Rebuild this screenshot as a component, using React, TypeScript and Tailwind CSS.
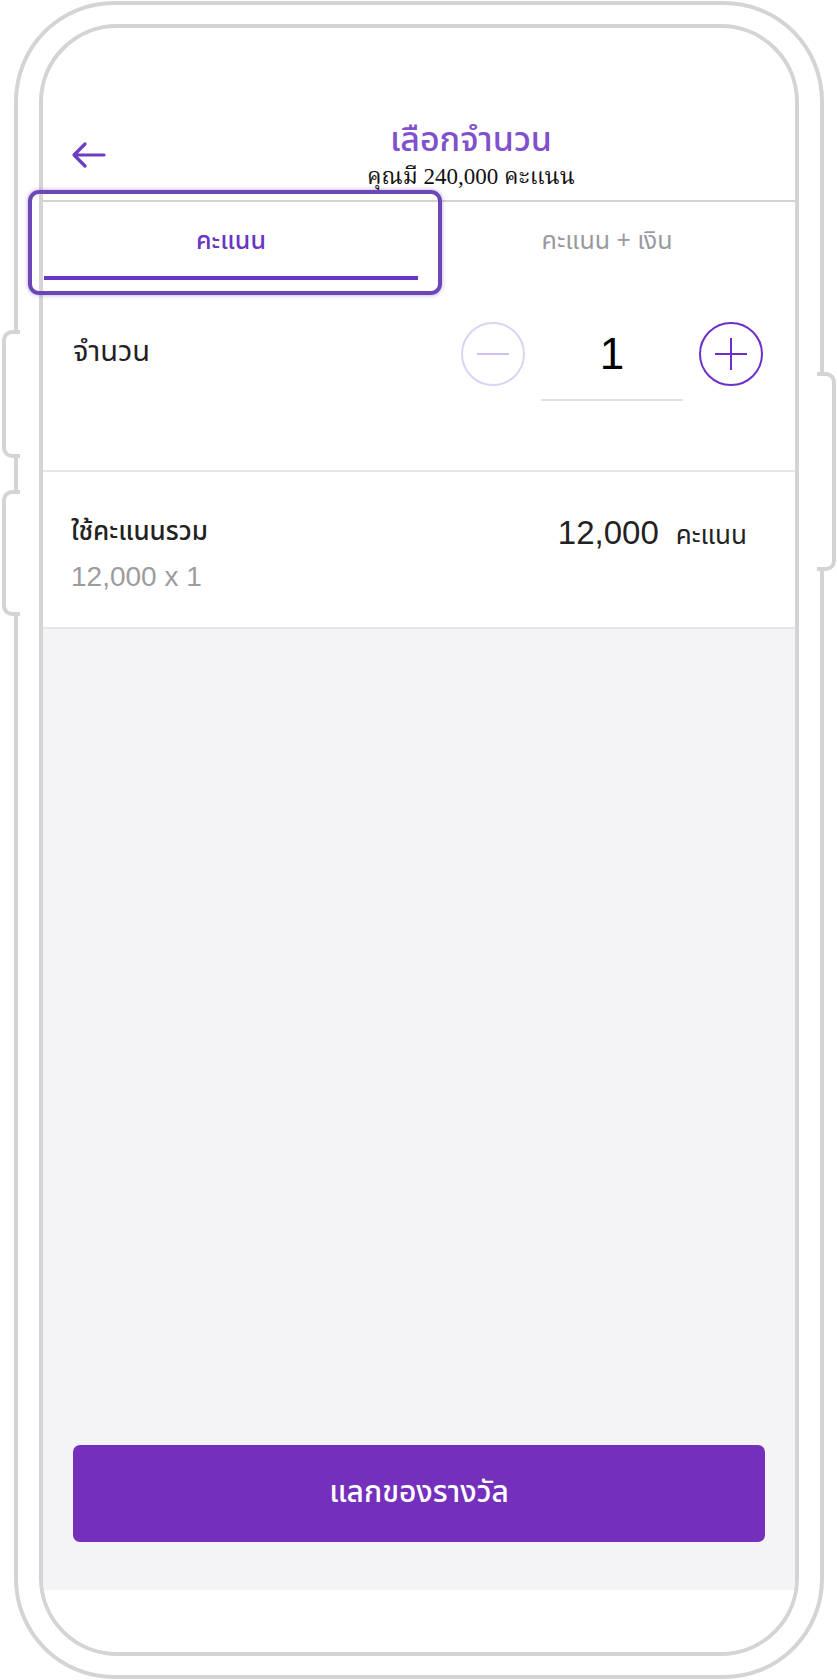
import React from "react";

const thai = { fontFamily: '"Noto Sans Thai", "Noto Sans", "Liberation Sans", sans-serif' };
const serif = { fontFamily: '"Liberation Serif", "Noto Serif Thai", "Noto Serif", serif' };
const sans = { fontFamily: '"Liberation Sans", "Noto Sans Thai", sans-serif' };

export default function App() {
  return (
    <div className="relative w-[837px] h-[1680px] bg-white overflow-hidden" style={thai}>
      {/* side buttons */}
      <div className="absolute left-[2px] top-[330px] w-[18px] h-[128px] bg-white border-4 border-r-0 border-[#d4d4d6] rounded-l-[10px] z-10" />
      <div className="absolute left-[2px] top-[490px] w-[18px] h-[126px] bg-white border-4 border-r-0 border-[#d4d4d6] rounded-l-[10px] z-10" />
      <div className="absolute left-[817px] top-[372px] w-[19px] h-[199px] bg-white border-4 border-l-0 border-[#d4d4d6] rounded-r-[10px] z-10" />

      <div className="ml-[14px] mt-[1px] w-[810px] h-[1678px] border-4 border-[#d4d4d6] rounded-[100px] pl-[21px] pr-[20px] pt-[19px]">
        <div className="w-[760px] h-[1632px] border-4 border-[#d4d4d6] rounded-[78px] overflow-hidden flex flex-col bg-white">
          {/* header */}
          <div className="relative h-[172px] shrink-0 flex flex-col items-center pt-[92px] pl-[104px]">
            <svg className="absolute left-[28px] top-[113px]" width="36" height="28" viewBox="0 0 36 28" fill="none">
              <path d="M33 14H4M14 3L3 14L14 25" stroke="#6c3cc6" strokeWidth="3.2" strokeLinecap="round" strokeLinejoin="round" />
            </svg>
            <div className="text-[34px] leading-[42px] text-[#8150cc] font-medium">เลือกจำนวน</div>
            <div className="text-[23px] leading-[26px] text-[#111] mt-[2px]" style={serif}>คุณมี 240,000 คะแนน</div>
          </div>
          <div className="h-[2px] bg-[#d2d2d4] shrink-0" />
          {/* tabs */}
          <div className="flex h-[80px] shrink-0">
            <div className="flex-1 flex flex-col">
              <div className="flex-1 flex items-center justify-center pt-[6px] text-[25px] text-[#6a35c0] font-medium">คะแนน</div>
              <div className="h-[4px] bg-[#6a35c8] ml-[1px] mr-[1px] mb-[2px]" />
            </div>
            <div className="flex-1 flex flex-col">
              <div className="flex-1 flex items-center justify-center pt-[6px] text-[25px] text-[#9a9a9e]">คะแนน + เงิน</div>
              <div className="h-[6px]" />
            </div>
          </div>
          {/* quantity */}
          <div className="h-[188px] shrink-0 flex items-start justify-between pl-[30px] pr-[32px] pt-[40px]">
            <div className="text-[29px] leading-[40px] text-[#222] mt-[10px]">จำนวน</div>
            <div className="flex items-start">
              <div className="w-[64px] h-[64px] rounded-full border-2 border-[#dcd2f2] flex items-center justify-center">
                <div className="w-[32px] h-[2px] bg-[#cfc2f0]" />
              </div>
              <div className="w-[142px] ml-[16px] mr-[16px] flex flex-col items-center">
                <div className="h-[64px] flex items-center text-[44px] text-black" style={sans}>1</div>
                <div className="mt-[13px] w-full h-[2px] bg-[#e2e2e4]" />
              </div>
              <div className="w-[64px] h-[64px] rounded-full border-2 border-[#6d2fc9] flex items-center justify-center relative">
                <div className="absolute w-[32px] h-[2.5px] bg-[#6d2fc9]" />
                <div className="absolute w-[2.5px] h-[32px] bg-[#6d2fc9]" />
              </div>
            </div>
          </div>
          <div className="h-[2px] bg-[#e6e6e9] shrink-0" />
          {/* summary */}
          <div className="h-[155px] shrink-0 flex justify-between pl-[28px] pr-[48px] pt-[42px]">
            <div className="flex flex-col">
              <div className="text-[26px] leading-[36px] text-[#222] font-medium">ใช้คะแนนรวม</div>
              <div className="text-[28px] leading-[34px] text-[#9c9ca0] mt-[10px]" style={sans}>12,000 x 1</div>
            </div>
            <div className="flex items-baseline gap-[17px]">
              <div className="text-[33px] leading-[38px] text-[#222]" style={sans}>12,000</div>
              <div className="text-[26px] text-[#222]">คะแนน</div>
            </div>
          </div>
          <div className="h-[2px] bg-[#e6e6e9] shrink-0" />
          {/* gray area */}
          <div className="h-[961px] shrink-0 bg-[#f4f3f6] flex flex-col justify-end px-[30px] pb-[48px]">
            <div className="h-[97px] rounded-[7px] bg-[#7430bd] flex items-center justify-center text-white text-[30px] font-medium">แลกของรางวัล</div>
          </div>
          <div className="flex-1 bg-white" />
        </div>
      </div>

      {/* highlight annotation */}
      <div className="absolute left-[28px] top-[190px] w-[414px] h-[105px] rounded-[11px] border-4 border-[#6c47b6] shadow-[0_0_4px_rgba(120,70,200,0.5)]" />
    </div>
  );
}
